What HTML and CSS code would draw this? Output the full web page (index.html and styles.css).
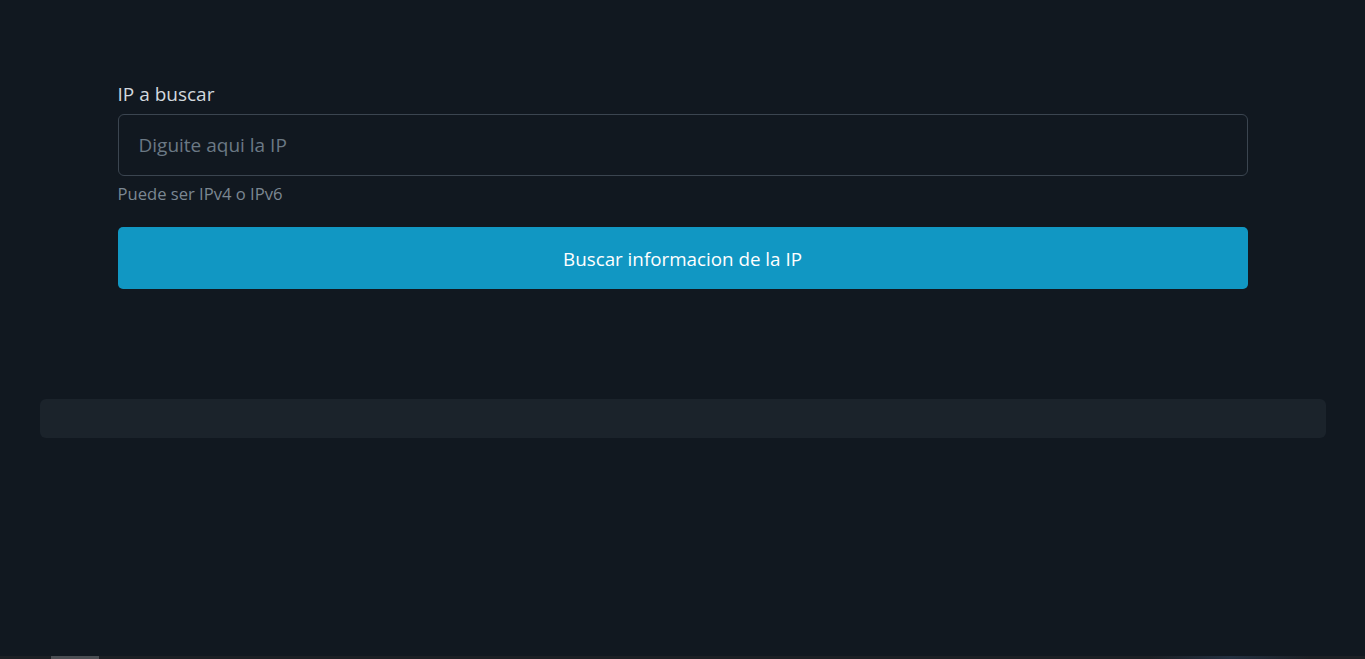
FILE: index.html
```html
<!DOCTYPE html>
<html lang="es">
<head>
<meta charset="utf-8">
<title>Buscar IP</title>
<link rel="stylesheet" href="styles.css">
</head>
<body>
<main class="page">
  <form class="search">
    <label class="label" for="ip">IP a buscar</label>
    <input class="input" id="ip" type="text" placeholder="Diguite aqui la IP">
    <div class="hint">Puede ser IPv4 o IPv6</div>
    <button class="btn" type="button">Buscar informacion de la IP</button>
  </form>
  <section class="result"></section>
</main>
<div class="hscroll"><div class="thumb"></div><div class="glow"></div></div>
</body>
</html>
```
FILE: styles.css
```css
html, body {
  margin: 0;
  padding: 0;
  background: #111820;
  height: 100%;
  overflow: hidden;
}
body {
  font-family: "Open Sans", "Noto Sans", sans-serif;
  color: #dee2e6;
}
.page {
  display: flex;
  flex-direction: column;
  align-items: center;
  padding-top: 81px;
}
.search {
  width: 1130px;
  display: flex;
  flex-direction: column;
}
.label {
  font-size: 19px;
  line-height: 27px;
  margin-bottom: 6px;
  color: #d2d8de;
}
.input {
  box-sizing: border-box;
  height: 62px;
  padding: 0 20px;
  font-family: inherit;
  font-size: 19px;
  background: #111820;
  color: #dee2e6;
  border: 1px solid #3b4550;
  border-radius: 6px;
  outline: none;
}
.input::placeholder {
  color: #6b7985;
}
.hint {
  margin-top: 6px;
  font-size: 16.6px;
  line-height: 24px;
  color: #7b8792;
}
.btn {
  margin-top: 21px;
  height: 62px;
  border: none;
  border-radius: 5px;
  background: #1197c3;
  color: #ffffff;
  font-family: inherit;
  font-size: 18.8px;
  padding-top: 2px;
}
.result {
  margin-top: 110px;
  width: 1286px;
  height: 39px;
  background: #1b232b;
  border-radius: 6px;
}
.hscroll {
  position: fixed;
  left: 0;
  right: 0;
  bottom: 0;
  height: 3px;
  background: #1c1f24;
}
.thumb {
  position: absolute;
  left: 51px;
  width: 48px;
  top: 0;
  bottom: 0;
  background: #4b4e53;
}
.glow {
  position: absolute;
  left: 1150px;
  width: 160px;
  top: 0;
  bottom: 0;
  background: linear-gradient(90deg, #1c1f24, #243040, #1c1f24);
}
```
